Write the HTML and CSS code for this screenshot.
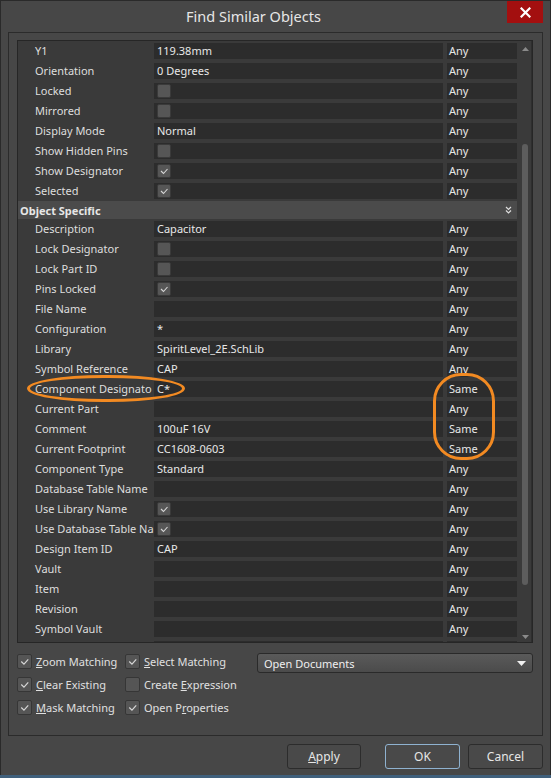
FILE: index.html
```html
<!DOCTYPE html>
<html>
<head>
<meta charset="utf-8">
<link rel="stylesheet" href="styles.css">
</head>
<body>
<div class="window">
  <div class="titlebar">
    <div class="title">Find Similar Objects</div>
    <div class="close"><svg width="11" height="11" viewBox="0 0 11 11"><path d="M1.5 1.5 L9.5 9.5 M9.5 1.5 L1.5 9.5" stroke="#fff" stroke-width="2.2" stroke-linecap="square"/></svg></div>
  </div>
  <div class="frame">
    <div class="grid">
      <div class="rows">
        <div class="row"><div class="label">Y1</div><div class="val">119.38mm</div><div class="any">Any</div></div>
        <div class="row"><div class="label">Orientation</div><div class="val">0 Degrees</div><div class="any">Any</div></div>
        <div class="row"><div class="label">Locked</div><div class="val"><span class="gcb"></span></div><div class="any">Any</div></div>
        <div class="row"><div class="label">Mirrored</div><div class="val"><span class="gcb"></span></div><div class="any">Any</div></div>
        <div class="row"><div class="label">Display Mode</div><div class="val">Normal</div><div class="any">Any</div></div>
        <div class="row"><div class="label">Show Hidden Pins</div><div class="val"><span class="gcb"></span></div><div class="any">Any</div></div>
        <div class="row"><div class="label">Show Designator</div><div class="val"><span class="gcb"><svg viewBox="0 0 14 14" class="tick"><polyline points="4,7 6.5,9.5 10.5,5"/></svg></span></div><div class="any">Any</div></div>
        <div class="row"><div class="label">Selected</div><div class="val"><span class="gcb"><svg viewBox="0 0 14 14" class="tick"><polyline points="4,7 6.5,9.5 10.5,5"/></svg></span></div><div class="any">Any</div></div>
        <div class="header"><span>Object Specific</span><svg class="chev" width="7" height="8" viewBox="0 0 7 8"><polyline points="1,1 3.5,3.5 6,1"/><polyline points="1,4.5 3.5,7 6,4.5"/></svg></div>
        <div class="row"><div class="label">Description</div><div class="val">Capacitor</div><div class="any">Any</div></div>
        <div class="row"><div class="label">Lock Designator</div><div class="val"><span class="gcb"></span></div><div class="any">Any</div></div>
        <div class="row"><div class="label">Lock Part ID</div><div class="val"><span class="gcb"></span></div><div class="any">Any</div></div>
        <div class="row"><div class="label">Pins Locked</div><div class="val"><span class="gcb"><svg viewBox="0 0 14 14" class="tick"><polyline points="4,7 6.5,9.5 10.5,5"/></svg></span></div><div class="any">Any</div></div>
        <div class="row"><div class="label">File Name</div><div class="val"></div><div class="any">Any</div></div>
        <div class="row"><div class="label">Configuration</div><div class="val">*</div><div class="any">Any</div></div>
        <div class="row"><div class="label">Library</div><div class="val">SpiritLevel_2E.SchLib</div><div class="any">Any</div></div>
        <div class="row"><div class="label">Symbol Reference</div><div class="val">CAP</div><div class="any">Any</div></div>
        <div class="row"><div class="label">Component Designato</div><div class="val">C*</div><div class="any">Same</div></div>
        <div class="row"><div class="label">Current Part</div><div class="val"></div><div class="any">Any</div></div>
        <div class="row"><div class="label">Comment</div><div class="val">100uF 16V</div><div class="any">Same</div></div>
        <div class="row"><div class="label">Current Footprint</div><div class="val">CC1608-0603</div><div class="any">Same</div></div>
        <div class="row"><div class="label">Component Type</div><div class="val">Standard</div><div class="any">Any</div></div>
        <div class="row"><div class="label">Database Table Name</div><div class="val"></div><div class="any">Any</div></div>
        <div class="row"><div class="label">Use Library Name</div><div class="val"><span class="gcb"><svg viewBox="0 0 14 14" class="tick"><polyline points="4,7 6.5,9.5 10.5,5"/></svg></span></div><div class="any">Any</div></div>
        <div class="row"><div class="label">Use Database Table Na</div><div class="val"><span class="gcb"><svg viewBox="0 0 14 14" class="tick"><polyline points="4,7 6.5,9.5 10.5,5"/></svg></span></div><div class="any">Any</div></div>
        <div class="row"><div class="label">Design Item ID</div><div class="val">CAP</div><div class="any">Any</div></div>
        <div class="row"><div class="label">Vault</div><div class="val"></div><div class="any">Any</div></div>
        <div class="row"><div class="label">Item</div><div class="val"></div><div class="any">Any</div></div>
        <div class="row"><div class="label">Revision</div><div class="val"></div><div class="any">Any</div></div>
        <div class="row"><div class="label">Symbol Vault</div><div class="val"></div><div class="any">Any</div></div>
        <div class="row"><div class="label"></div><div class="val"></div><div class="any"></div></div>
      </div>
      <div class="scrollbar">
        <svg class="sarrow" width="7" height="4" viewBox="0 0 7 4"><polygon points="0,4 7,4 3.5,0"/></svg>
        <div class="track"><div class="thumb"></div></div>
        <svg class="sarrow" width="7" height="4" viewBox="0 0 7 4"><polygon points="0,0 7,0 3.5,4"/></svg>
      </div>
    </div>
    <div class="options">
      <div class="checks">
        <div class="opt"><span class="cb"><svg viewBox="0 0 14 14" class="tick"><polyline points="4,7 6.5,9.5 10.5,5"/></svg></span><span><u>Z</u>oom Matching</span></div>
        <div class="opt"><span class="cb"><svg viewBox="0 0 14 14" class="tick"><polyline points="4,7 6.5,9.5 10.5,5"/></svg></span><span><u>S</u>elect Matching</span></div>
        <div class="opt"><span class="cb"><svg viewBox="0 0 14 14" class="tick"><polyline points="4,7 6.5,9.5 10.5,5"/></svg></span><span><u>C</u>lear Existing</span></div>
        <div class="opt"><span class="cb"></span><span>Create <u>E</u>xpression</span></div>
        <div class="opt"><span class="cb"><svg viewBox="0 0 14 14" class="tick"><polyline points="4,7 6.5,9.5 10.5,5"/></svg></span><span><u>M</u>ask Matching</span></div>
        <div class="opt"><span class="cb"><svg viewBox="0 0 14 14" class="tick"><polyline points="4,7 6.5,9.5 10.5,5"/></svg></span><span>Open P<u>r</u>operties</span></div>
      </div>
      <div class="dropdown"><span>Open Documents</span><svg width="9" height="5" viewBox="0 0 9 5"><polygon points="0,0 9,0 4.5,5" fill="#f0f0f0"/></svg></div>
    </div>
  </div>
  <div class="buttons">
    <div class="btn apply"><u>A</u>pply</div>
    <div class="btn ok">OK</div>
    <div class="btn cancel">Cancel</div>
  </div>
  <div class="taskedge"></div>
  <div class="mark mark-label"></div>
  <div class="mark mark-same"></div>
</div>
</body>
</html>
```

FILE: styles.css
```css
* { box-sizing: border-box; }
html, body { margin: 0; padding: 0; }
body {
  width: 551px;
  height: 778px;
  overflow: hidden;
  background: #464646;
  font-family: "Noto Sans", "DejaVu Sans", sans-serif;
  font-size: 11px;
  color: #e2e2e2;
}
.window {
  position: relative;
  width: 551px;
  height: 778px;
  background: #474747;
  box-shadow: inset 1px 0 0 #2a2a2a, inset -1px 0 0 #2a2a2a, inset 0 1px 0 #2a2a2a;
  display: flex;
  flex-direction: column;
}
.titlebar {
  height: 32px;
  display: flex;
  flex-shrink: 0;
}
.title {
  width: 507px;
  text-align: center;
  line-height: 32px;
  font-size: 14.5px;
  color: #e6e6e6;
}
.close {
  width: 36px;
  height: 22px;
  margin-top: 1px;
  background: #a30f0f;
  display: flex;
  align-items: center;
  justify-content: center;
}
.frame {
  margin: 0 8px;
  height: 704px;
  flex-shrink: 0;
  border: 1px solid #2b2b2b;
  padding: 7px 9px 0 8px;
}
.grid {
  height: 603px;
  border: 1px solid #262626;
  background: #3a3a3a;
  display: flex;
}
.rows {
  width: 500px;
  overflow: hidden;
}
.row {
  height: 20px;
  display: flex;
  align-items: center;
}
.label {
  width: 136px;
  padding-left: 17px;
  white-space: nowrap;
  color: #dedede;
  line-height: 16px;
  font-size: 11px;
}
.val {
  width: 289px;
  height: 16px;
  background: #2c2c2c;
  padding-left: 3px;
  line-height: 16px;
  white-space: nowrap;
  color: #e8e8e8;
  display: flex;
  align-items: center;
}
.any {
  width: 70px;
  height: 16px;
  margin-left: 4px;
  background: #2c2c2c;
  padding-left: 2px;
  line-height: 16px;
  color: #e8e8e8;
}
.gcb {
  width: 14px;
  height: 14px;
  background: #565656;
  border: 1px solid #3a3a3a;
  border-radius: 2px;
  display: block;
}
.tick {
  display: block;
  width: 100%;
  height: 100%;
  fill: none;
  stroke: #d6d6d6;
  stroke-width: 1.1;
}
.gcb .tick { margin: -1px; width: 14px; height: 14px; }
.header {
  height: 18px;
  background: #4b4b4b;
  display: flex;
  align-items: center;
  justify-content: space-between;
  padding-left: 2px;
  padding-right: 5px;
  font-weight: bold;
  color: #e6e6e6;
  width: 499px;
}
.chev { fill: none; stroke: #dddddd; stroke-width: 1.2; }
.scrollbar {
  width: 14px;
  display: flex;
  flex-direction: column;
  align-items: center;
  padding: 6px 0 3px 2px;
  border-right: 1px solid #2e2e2e;
}
.sarrow { fill: #8a8a8a; flex-shrink: 0; }
.track {
  flex: 1;
  width: 7px;
  display: flex;
  flex-direction: column;
}
.thumb {
  margin-top: 93px;
  height: 441px;
  width: 6px;
  background: #5d5d5d;
  border-radius: 3px;
}
.options {
  display: flex;
  margin-top: 7px;
}
.checks {
  display: grid;
  grid-template-columns: 108px 132px;
  grid-auto-rows: 23px;
}
.opt {
  display: flex;
  align-items: center;
  white-space: nowrap;
  color: #e0e0e0;
}
.cb {
  width: 15px;
  height: 15px;
  background: #555555;
  border: 1px solid #363636;
  border-radius: 2px;
  margin-right: 4px;
  display: block;
  flex-shrink: 0;
}
.cb .tick { margin: -1px; width: 15px; height: 15px; }
.dropdown {
  width: 276px;
  height: 20px;
  margin-top: 3px;
  border: 1px solid #2a2a2a;
  border-radius: 3px;
  background: linear-gradient(#5a5a5a, #4b4b4b);
  display: flex;
  align-items: center;
  justify-content: space-between;
  padding: 0 6px 0 6px;
  color: #efefef;
}
.buttons {
  height: 39px;
  display: flex;
  justify-content: flex-end;
  padding: 8px 8px 0 0;
}
.btn {
  height: 25px;
  width: 75px;
  border: 1px solid #2c2c2c;
  border-radius: 3px;
  background: #494949;
  display: flex;
  align-items: center;
  justify-content: center;
  font-size: 12px;
  color: #e6e6e6;
}
.apply { width: 74px; margin-right: 24px; }
.ok { margin-right: 8px; border-color: #8fb2d0; }
.taskedge {
  height: 3px;
  background: #40607c;
}
.mark {
  position: absolute;
  border: 3px solid #f28a22;
}
.mark-label {
  left: 27px;
  top: 375px;
  width: 158px;
  height: 27px;
  border-radius: 79px / 14px;
}
.mark-same {
  left: 433px;
  top: 373px;
  width: 62px;
  height: 87px;
  border-radius: 28px / 28px;
}
```
